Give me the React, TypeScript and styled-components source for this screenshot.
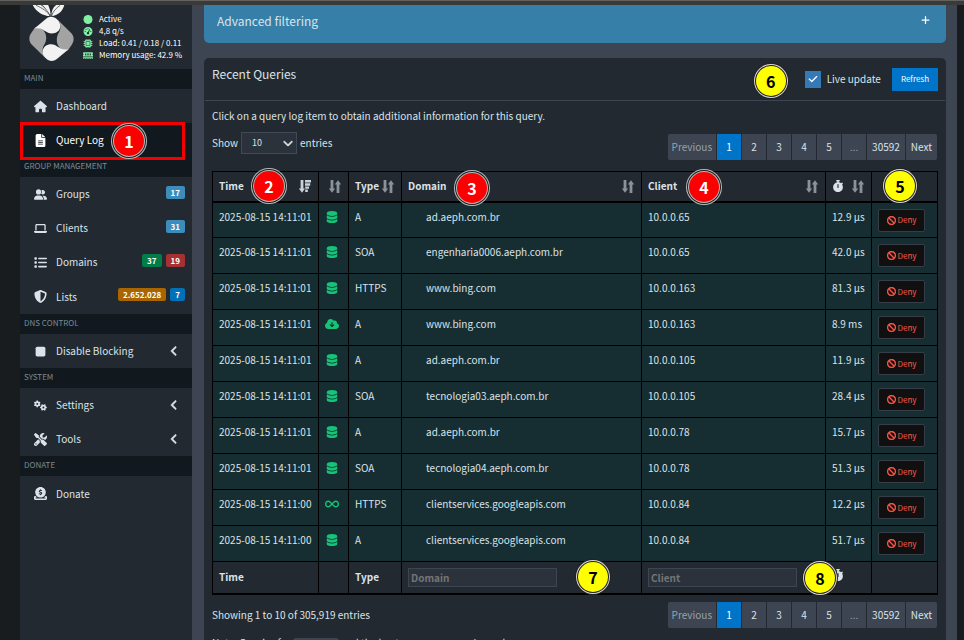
import React from "react";
import styled, { createGlobalStyle, css } from "styled-components";
import {
  FaAngleLeft,
  FaBan,
  FaCheck,
  FaChevronDown,
  FaCircle,
  FaCircleDollarToSlot,
  FaCloudArrowDown,
  FaDatabase,
  FaFileLines,
  FaGaugeHigh,
  FaGears,
  FaHouse,
  FaInfinity,
  FaLaptop,
  FaList,
  FaMemory,
  FaMicrochip,
  FaPlus,
  FaScrewdriverWrench,
  FaShieldHalved,
  FaStop,
  FaStopwatch,
  FaUserGroup,
} from "react-icons/fa6";

const GlobalStyle = createGlobalStyle`
  *, *::before, *::after { box-sizing: border-box; }
  body {
    margin: 0;
    background: #181c1f;
    color: #dbe3e8;
    font: 400 10px/16px "Noto Sans CJK SC", "Noto Sans", sans-serif;
  }
  button, input, select { font: inherit; color: inherit; margin: 0; }
`;

const Page = styled.div`
  height: 100vh;
  overflow: hidden;
  display: flex;
  flex-direction: column;
`;

const TopStrip = styled.div`
  flex: none;
  height: 5px;
  background: #3a3a39;
  border-top: 1px solid #626260;
`;

const Shell = styled.div`
  flex: 1;
  min-height: 0;
  display: flex;
  padding: 0 7px 0 20px;
`;

const Sidebar = styled.aside`
  flex: none;
  width: 172px;
  background: #222930;
`;

const UserPanel = styled.div`
  display: flex;
  height: 64px;
  padding-left: 9px;
  gap: 9px;
`;

const Logo = styled.svg`
  display: block;
  width: 45px;
  height: 57px;
`;

const Stats = styled.ul`
  list-style: none;
  margin: 0;
  padding: 8px 0 0;
  color: #fff;
  font-size: 8px;
  line-height: 12px;
  white-space: nowrap;
`;

const Stat = styled.li`
  display: flex;
  align-items: center;
  height: 12px;
  gap: 6px;
  svg {
    width: 10px;
    height: 9px;
    color: #7ff0a4;
  }
`;

const NavHeader = styled.h2`
  margin: 0;
  height: 20px;
  padding: 0 0 0 4px;
  background: #11191f;
  color: #7d8992;
  font-size: 8px;
  font-weight: 400;
  line-height: 18px;
`;

const NavLink = styled.a<{ $active?: boolean; $tall?: boolean }>`
  position: relative;
  display: flex;
  align-items: center;
  height: ${(p) => (p.$tall ? 35 : 34)}px;
  padding: 0 7px 0 13px;
  color: #dbe3e8;
  text-decoration: none;
  ${(p) =>
    p.$active &&
    css`
      color: #fff;
      background: #11191f;
    `}
`;

const NavIcon = styled.span`
  display: flex;
  justify-content: center;
  width: 15px;
  margin-right: 8px;
  font-size: 13px;
`;

const NavText = styled.span`
  flex: 1;
`;

const Caret = styled(FaAngleLeft)`
  margin-right: 5px;
  font-size: 12px;
  stroke: currentColor;
  stroke-width: 24px;
`;

const Badge = styled.span<{ $color: string }>`
  margin: -4px 0 0 4px;
  padding: 0 5px;
  border-radius: 2px;
  background: ${(p) => p.$color};
  color: #fff;
  font-size: 8px;
  font-weight: 700;
  line-height: 13px;
`;

const HighlightBox = styled.span`
  position: absolute;
  inset: -1px 7px -3px 0;
  border: 3px solid #f40000;
  z-index: 1;
`;

const Marker = styled.span<{ $tone: "red" | "yellow"; $x: number; $y: number }>`
  position: absolute;
  left: ${(p) => p.$x}px;
  top: ${(p) => p.$y}px;
  z-index: 2;
  width: 30px;
  height: 30px;
  border-radius: 50%;
  background: ${(p) => (p.$tone === "red" ? "#fb0000" : "#ffff00")};
  color: ${(p) => (p.$tone === "red" ? "#fff" : "#000")};
  box-shadow: ${(p) =>
    p.$tone === "red"
      ? "0 0 0 1px #b9b9b9, 0 0 0 2px #1c1c1c, 0 0 0 3px #b9b9b9"
      : "0 0 0 1px #222, 0 0 0 2px #d8d8d8, 0 0 0 3px #222"};
  font-size: 16px;
  font-weight: 700;
  line-height: 30px;
  text-align: center;
`;

const Content = styled.main`
  flex: 1;
  min-width: 0;
  display: flex;
  flex-direction: column;
  gap: 15px;
  padding: 0 11px 0 12px;
  background: #3c4551;
`;

const FilterBox = styled.section`
  flex: none;
  display: flex;
  justify-content: space-between;
  height: 38px;
  padding: 6px 16px 0 13px;
  border-radius: 0 0 5px 5px;
  background: #367fa9;
`;

const BoxTitle = styled.h3`
  margin: 0;
  font-size: 12px;
  font-weight: 400;
  line-height: 20px;
`;

const ExpandButton = styled.button`
  display: flex;
  width: 9px;
  height: 18px;
  padding: 0;
  border: 0;
  align-items: center;
  background: none;
  color: #fff;
  font-size: 10px;
`;

const Card = styled.section`
  flex: none;
  border-radius: 5px 5px 0 0;
  background: #222930;
`;

const CardHeader = styled.header`
  position: relative;
  display: flex;
  justify-content: space-between;
  height: 43px;
  margin: 0 1px;
  padding: 6px 7px 0;
  border-bottom: 1px solid #3c4652;
`;

const Tools = styled.div`
  position: relative;
  display: flex;
  align-items: center;
  height: 30px;
`;

const CheckLabel = styled.label`
  position: relative;
  display: flex;
  align-items: center;
  gap: 6px;
  margin-right: 11px;
  svg {
    position: absolute;
    left: 3px;
    font-size: 10px;
    color: #fff;
    pointer-events: none;
  }
`;

const CheckBox = styled.input`
  appearance: none;
  width: 16px;
  height: 17px;
  background: #337ab7;
`;

const RefreshButton = styled.button`
  height: 23px;
  padding: 0 9px;
  border: 0;
  background: #0074c8;
  color: #fff;
  font-size: 8px;
`;

const CardBody = styled.div`
  padding: 7px 8px;
`;

const Text = styled.p`
  margin: 0;
`;

const ControlRow = styled.div`
  display: flex;
  justify-content: space-between;
  align-items: flex-start;
  height: 47px;
`;

const LengthLabel = styled.label`
  display: flex;
  align-items: center;
  gap: 3px;
  margin-top: 8px;
`;

const SelectWrap = styled.span`
  position: relative;
  display: flex;
  svg {
    position: absolute;
    right: 4px;
    top: 6px;
    font-size: 10px;
    stroke: currentColor;
    stroke-width: 32px;
    pointer-events: none;
  }
`;

const Select = styled.select`
  appearance: none;
  width: 56px;
  height: 22px;
  padding: 0 10px;
  border: 1px solid #3e4a56;
  border-radius: 0;
  background: #2b323b;
  font-size: 9px;
`;

const Pager = styled.nav<{ $top?: number }>`
  display: flex;
  gap: 1px;
  margin: ${(p) => p.$top ?? 0}px 1px 0 0;
`;

const PageButton = styled.button<{ $active?: boolean; $muted?: boolean }>`
  min-width: 24px;
  height: 26px;
  padding: 0 5px;
  border: 0;
  background: ${(p) => (p.$active ? "#0074c8" : "#3c4551")};
  color: ${(p) => (p.$active ? "#fff" : p.$muted ? "#98a2ab" : "#dbe3e8")};
  &:first-child { border-radius: 2px 0 0 2px; padding: 0 4px; }
  &:last-child { border-radius: 0 2px 2px 0; }
`;

const Table = styled.table`
  width: 100%;
  table-layout: fixed;
  border-collapse: collapse;
  border: 1px solid #000;
`;

const Col = styled.col<{ $width?: number }>`
  width: ${(p) => (p.$width ? `${p.$width}px` : "auto")};
`;

const HeadCell = styled.th`
  position: relative;
  height: 30px;
  padding: 0 7px 0 6px;
  border: 1px solid #000;
  border-bottom-width: 2px;
  text-align: left;
`;

const HeadLine = styled.div`
  display: flex;
  align-items: center;
  justify-content: space-between;
`;

const FootCell = styled.th`
  position: relative;
  height: 32px;
  padding: 0 6px;
  border: 1px solid #000;
  border-bottom-width: 2px;
  text-align: left;
`;

const Cell = styled.td<{ $indent?: boolean }>`
  height: 36px;
  padding: 6px 0 0 ${(p) => (p.$indent ? 24 : 6)}px;
  border: 1px solid #000;
  background: #162d32;
  vertical-align: top;
  white-space: nowrap;
`;

const StatusCell = styled(Cell)`
  color: #15c477;
  svg {
    display: block;
    width: 14px;
    height: 12px;
    margin-top: 2px;
  }
`;

const DenyButton = styled.button`
  display: flex;
  align-items: center;
  justify-content: center;
  gap: 2px;
  width: 47px;
  height: 23px;
  padding: 0;
  border: 1px solid #363d49;
  border-radius: 2px;
  background: #101010;
  color: #ff5a4a;
  font-size: 8px;
  svg {
    font-size: 9px;
    stroke: currentColor;
    stroke-width: 16px;
  }
`;

const ColumnInput = styled.input`
  display: block;
  width: 149px;
  height: 19px;
  padding: 0 2px;
  border: 1px solid #3c4652;
  background: #2b323b;
  font-weight: 700;
  &::placeholder { color: #757575; }
`;

const SortSvg = styled.svg`
  display: block;
  flex: none;
  width: 12px;
  height: 13px;
`;

const FooterRow = styled.div`
  display: flex;
  justify-content: space-between;
  height: 35px;
  padding-top: 7px;
`;

const Info = styled(Text)`
  padding-top: 5px;
`;

const Code = styled.code`
  padding: 2px 4px;
  border-radius: 3px;
  background: #3c4551;
  font: 9px/12px "Liberation Mono", monospace;
`;

const SortIcon = () => (
  <SortSvg viewBox="0 0 12 13" fill="#8b9298" aria-hidden>
    <path d="M1.6 0h2.8v8.6H6.2L3 12.8-.2 8.6h1.8zM7.6 13V4.4H5.8L9 .2l3.2 4.2h-1.8V13z" />
  </SortSvg>
);

const SortDescIcon = () => (
  <SortSvg viewBox="0 0 12 13" fill="#c9d1d7" aria-hidden>
    <path d="M1.6 0h2.8v8.6H6L3 12.8-.2 8.6h1.8zM6 0h6v2.6H6zM6 3.2h5.2v2.5H6zM6 6.4h4v2.4H6.4zM6.2 9.6h2.6V12H6.2z" />
  </SortSvg>
);

const PiLogo = () => (
  <Logo viewBox="27 15 134 170" role="img" aria-label="Pi-hole">
    <g fill="#f2f2f2">
      <path d="M38 15H62C74 24 84 34 89 48C70 48 48 36 38 15Z" />
      <path d="M66 15H84C89 26 92 37 91 48C85 34 76 24 66 15Z" />
      <path d="M132 15H108C98 22 93 34 94 48C112 47 128 34 132 15Z" />
    </g>
    <path
      fill="none"
      stroke="#222930"
      strokeWidth="2"
      d="M48 16C66 24 82 34 90 48M120 16C108 24 98 34 94 48"
    />
    {[0, 180].map((angle) => (
      <g key={angle} transform={`rotate(${angle} 94 116)`}>
        <path
          fill="#a3a3a3"
          d="M45 82C68 80 80 98 78 116C77 134 66 136 68 154C69 162 71 168 75 172L34 132C26 122 26 109 34 98Z"
        />
        <path
          fill="#f2f2f2"
          d="M43 85L78 56C88 48 101 48 111 58C118 64 121 72 120 80C119 92 108 100 95 100C76 100 70 80 43 85Z"
        />
      </g>
    ))}
  </Logo>
);

const STATUS_ICONS = {
  cache: FaDatabase,
  forwarded: FaCloudArrowDown,
  optimizer: FaInfinity,
};

type Query = [string, keyof typeof STATUS_ICONS, string, string, string, string];

const QUERIES: Query[] = [
  ["2025-08-15 14:11:01", "cache", "A", "ad.aeph.com.br", "10.0.0.65", "12.9 µs"],
  ["2025-08-15 14:11:01", "cache", "SOA", "engenharia0006.aeph.com.br", "10.0.0.65", "42.0 µs"],
  ["2025-08-15 14:11:01", "cache", "HTTPS", "www.bing.com", "10.0.0.163", "81.3 µs"],
  ["2025-08-15 14:11:01", "forwarded", "A", "www.bing.com", "10.0.0.163", "8.9 ms"],
  ["2025-08-15 14:11:01", "cache", "A", "ad.aeph.com.br", "10.0.0.105", "11.9 µs"],
  ["2025-08-15 14:11:01", "cache", "SOA", "tecnologia03.aeph.com.br", "10.0.0.105", "28.4 µs"],
  ["2025-08-15 14:11:01", "cache", "A", "ad.aeph.com.br", "10.0.0.78", "15.7 µs"],
  ["2025-08-15 14:11:01", "cache", "SOA", "tecnologia04.aeph.com.br", "10.0.0.78", "51.3 µs"],
  ["2025-08-15 14:11:00", "optimizer", "HTTPS", "clientservices.googleapis.com", "10.0.0.84", "12.2 µs"],
  ["2025-08-15 14:11:00", "cache", "A", "clientservices.googleapis.com", "10.0.0.84", "51.7 µs"],
];

interface NavItemProps {
  icon: React.ReactNode;
  label: string;
  active?: boolean;
  tall?: boolean;
  children?: React.ReactNode;
}

const NavItem = ({ icon, label, active, tall, children }: NavItemProps) => (
  <NavLink href="#" $active={active} $tall={tall}>
    <NavIcon>{icon}</NavIcon>
    <NavText>{label}</NavText>
    {children}
  </NavLink>
);

const Pagination = ({ top }: { top?: number }) => (
  <Pager aria-label="Pagination" $top={top}>
    {["Previous", "1", "2", "3", "4", "5", "…", "30592", "Next"].map((label) => (
      <PageButton
        key={label}
        type="button"
        $active={label === "1"}
        $muted={label === "Previous" || label === "…"}
        disabled={label === "Previous" || label === "…"}
      >
        {label === "…" ? "..." : label}
      </PageButton>
    ))}
  </Pager>
);

export default function App() {
  return (
    <Page>
      <GlobalStyle />
      <TopStrip />
      <Shell>
        <Sidebar>
          <UserPanel>
            <PiLogo />
            <Stats>
              <Stat><FaCircle />Active</Stat>
              <Stat><FaGaugeHigh />4,8 q/s</Stat>
              <Stat><FaMicrochip />Load: 0.41 / 0.18 / 0.11</Stat>
              <Stat><FaMemory />Memory usage: 42.9 %</Stat>
            </Stats>
          </UserPanel>
          <nav>
            <NavHeader>MAIN</NavHeader>
            <NavItem icon={<FaHouse />} label="Dashboard" />
            <NavItem icon={<FaFileLines />} label="Query Log" active>
              <HighlightBox />
              <Marker $tone="red" $x={94} $y={3}>1</Marker>
            </NavItem>
            <NavHeader>GROUP MANAGEMENT</NavHeader>
            <NavItem icon={<FaUserGroup />} label="Groups">
              <Badge $color="#3c8dbc">17</Badge>
            </NavItem>
            <NavItem icon={<FaLaptop />} label="Clients">
              <Badge $color="#3c8dbc">31</Badge>
            </NavItem>
            <NavItem icon={<FaList />} label="Domains">
              <Badge $color="#007d48">37</Badge>
              <Badge $color="#a53230">19</Badge>
            </NavItem>
            <NavItem icon={<FaShieldHalved />} label="Lists" tall>
              <Badge $color="#a96500">2.652.028</Badge>
              <Badge $color="#0070b8">7</Badge>
            </NavItem>
            <NavHeader>DNS CONTROL</NavHeader>
            <NavItem icon={<FaStop />} label="Disable Blocking"><Caret /></NavItem>
            <NavHeader>SYSTEM</NavHeader>
            <NavItem icon={<FaGears />} label="Settings"><Caret /></NavItem>
            <NavItem icon={<FaScrewdriverWrench />} label="Tools"><Caret /></NavItem>
            <NavHeader>DONATE</NavHeader>
            <NavItem icon={<FaCircleDollarToSlot />} label="Donate" tall />
          </nav>
        </Sidebar>
        <Content>
          <FilterBox>
            <BoxTitle>Advanced filtering</BoxTitle>
            <ExpandButton type="button" aria-label="Expand"><FaPlus /></ExpandButton>
          </FilterBox>
          <Card>
            <CardHeader>
              <BoxTitle>Recent Queries</BoxTitle>
              <Tools>
                <Marker $tone="yellow" $x={-49} $y={2}>6</Marker>
                <CheckLabel>
                  <CheckBox type="checkbox" defaultChecked />
                  <FaCheck />
                  Live update
                </CheckLabel>
                <RefreshButton type="button">Refresh</RefreshButton>
              </Tools>
            </CardHeader>
            <CardBody>
              <Text>Click on a query log item to obtain additional information for this query.</Text>
              <ControlRow>
                <LengthLabel>
                  Show
                  <SelectWrap>
                    <Select defaultValue="10">
                      <option>10</option>
                      <option>25</option>
                      <option>50</option>
                    </Select>
                    <FaChevronDown />
                  </SelectWrap>
                  entries
                </LengthLabel>
                <Pagination top={10} />
              </ControlRow>
              <Table>
                <colgroup>
                  <Col $width={106} />
                  <Col $width={30} />
                  <Col $width={53} />
                  <Col />
                  <Col $width={184} />
                  <Col $width={46} />
                  <Col $width={66} />
                </colgroup>
                <thead>
                  <tr>
                    <HeadCell>
                      <HeadLine>Time<SortDescIcon /></HeadLine>
                      <Marker $tone="red" $x={41} $y={-1}>2</Marker>
                    </HeadCell>
                    <HeadCell aria-label="Status">
                      <HeadLine><span /><SortIcon /></HeadLine>
                    </HeadCell>
                    <HeadCell>
                      <HeadLine>Type<SortIcon /></HeadLine>
                    </HeadCell>
                    <HeadCell>
                      <HeadLine>Domain<SortIcon /></HeadLine>
                      <Marker $tone="red" $x={55} $y={1}>3</Marker>
                    </HeadCell>
                    <HeadCell>
                      <HeadLine>Client<SortIcon /></HeadLine>
                      <Marker $tone="red" $x={47} $y={0}>4</Marker>
                    </HeadCell>
                    <HeadCell aria-label="Reply time">
                      <HeadLine><FaStopwatch size={12} /><SortIcon /></HeadLine>
                    </HeadCell>
                    <HeadCell aria-label="Action">
                      <Marker $tone="yellow" $x={13} $y={-1}>5</Marker>
                    </HeadCell>
                  </tr>
                </thead>
                <tbody>
                  {QUERIES.map(([time, status, type, domain, client, reply], i) => {
                    const Icon = STATUS_ICONS[status];
                    return (
                      <tr key={i}>
                        <Cell>{time}</Cell>
                        <StatusCell><Icon /></StatusCell>
                        <Cell>{type}</Cell>
                        <Cell $indent>{domain}</Cell>
                        <Cell>{client}</Cell>
                        <Cell>{reply}</Cell>
                        <Cell>
                          <DenyButton type="button"><FaBan />Deny</DenyButton>
                        </Cell>
                      </tr>
                    );
                  })}
                </tbody>
                <tfoot>
                  <tr>
                    <FootCell>Time</FootCell>
                    <FootCell />
                    <FootCell>Type</FootCell>
                    <FootCell>
                      <ColumnInput placeholder="Domain" aria-label="Domain" />
                      <Marker $tone="yellow" $x={176} $y={0}>7</Marker>
                    </FootCell>
                    <FootCell>
                      <ColumnInput placeholder="Client" aria-label="Client" />
                      <Marker $tone="yellow" $x={163} $y={1}>8</Marker>
                    </FootCell>
                    <FootCell><FaStopwatch size={12} /></FootCell>
                    <FootCell />
                  </tr>
                </tfoot>
              </Table>
              <FooterRow>
                <Info>Showing 1 to 10 of 305,919 entries</Info>
                <Pagination />
              </FooterRow>
              <Info>
                Note: Queries for <Code>pi.hole</Code> and the hostname are never logged.
              </Info>
            </CardBody>
          </Card>
        </Content>
      </Shell>
    </Page>
  );
}
